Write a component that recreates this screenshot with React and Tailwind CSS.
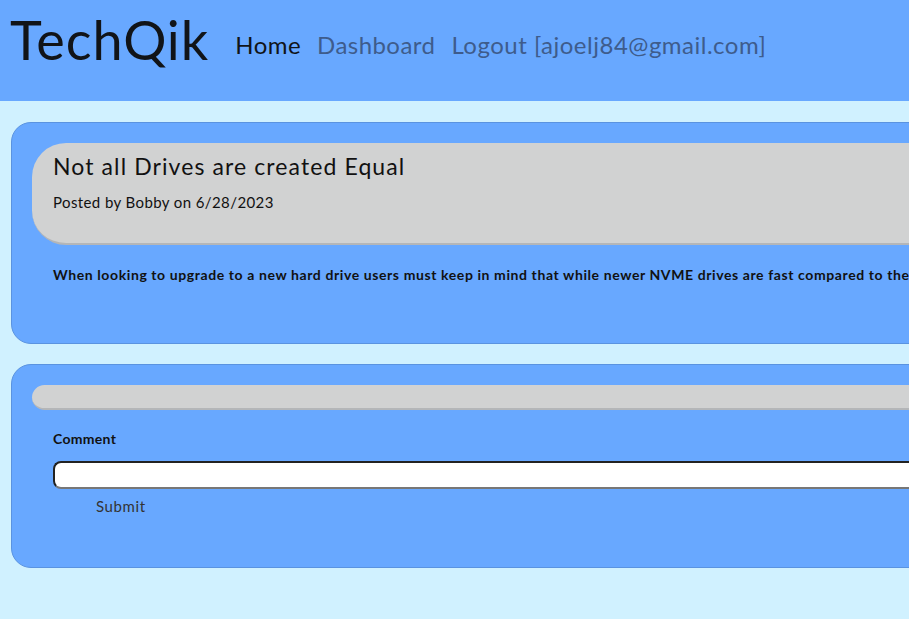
import React from 'react';

const font = { fontFamily: 'Lato, "Liberation Sans", sans-serif' };

const Header = () => (
  <header className="h-[101px] bg-[#68a8ff] flex items-start pl-[10px] pt-[10px]">
    <h1 className="text-[54px] leading-[60px] text-[#111418] tracking-[1px]">TechQik</h1>
    <nav className="flex gap-[16px] ml-[26px] mt-[20px] text-[24px] leading-[30px] tracking-[0.45px]">
      <a className="text-[#111418]">Home</a>
      <a className="text-[#3e5c8c]">Dashboard</a>
      <a className="text-[#3e5c8c] tracking-[0.5px]">Logout [ajoelj84@gmail.com]</a>
    </nav>
  </header>
);

const PostCard = () => (
  <section className="w-[1100px] ml-[11px] mt-[21px] h-[222px] bg-[#68a8ff] border border-[#5a93e0] rounded-[20px] pt-[20px] pl-[20px]">
    <div className="h-[102px] bg-[#d1d2d2] border-b-2 border-[#b4b6b8] rounded-[34px] pl-[21px] pt-[8px]">
      <h2 className="text-[23px] leading-[30px] text-[#111] tracking-[1.1px]">Not all Drives are created Equal</h2>
      <p className="text-[15px] leading-[20px] mt-[11px] text-[#111] tracking-[0.4px]">Posted by Bobby on 6/28/2023</p>
    </div>
    <p className="ml-[21px] mt-[19px] text-[14px] font-bold text-[#111] whitespace-nowrap tracking-[0.6px]">
      When looking to upgrade to a new hard drive users must keep in mind that while newer NVME drives are fast compared to their older SATA counterparts.
    </p>
  </section>
);

const CommentCard = () => (
  <section className="w-[1100px] ml-[11px] mt-[20px] h-[204px] bg-[#68a8ff] border border-[#5a93e0] rounded-[20px] pt-[20px] pl-[20px]">
    <div className="h-[25px] bg-[#d1d2d2] border-b-2 border-[#b4b6b8] rounded-full" />
    <form className="pl-[21px] mt-[19px]">
      <label className="block text-[14px] leading-[20px] font-bold text-[#111] tracking-[0.3px]">Comment</label>
      <input className="block mt-[12px] w-[1000px] h-[28px] bg-white border-2 border-t-[#222] border-l-[#222] border-r-[#777] border-b-[#777] rounded-[8px]" />
      <button type="button" className="ml-[43px] mt-[7px] text-[15px] leading-[20px] text-[#333] tracking-[0.6px]">Submit</button>
    </form>
  </section>
);

export default function App() {
  return (
    <div className="w-[909px] h-[619px] overflow-hidden bg-[#d0f1ff]" style={font}>
      <Header />
      <PostCard />
      <CommentCard />
    </div>
  );
}
